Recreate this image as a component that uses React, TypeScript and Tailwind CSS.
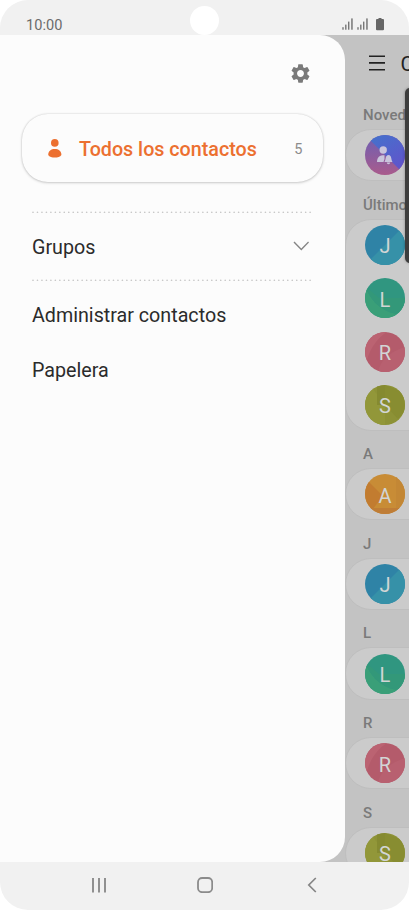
import type { ReactNode } from "react";
import { MdSettings } from "react-icons/md";

type AvatarKind = "J" | "L" | "R" | "S" | "A";

const avatarArt: Record<AvatarKind, ReactNode> = {
  J: (
    <>
      <rect width="40" height="40" fill="#2f83a6" />
      <path d="M40 0L6 34L6 40H40Z" fill="#3691a8" />
    </>
  ),
  L: (
    <>
      <rect width="40" height="40" fill="#309680" />
      <path d="M28 20H40V40H28Z" fill="#359d7b" />
      <path d="M0 8C5 21 14 32 31 36L28 40H0Z" fill="#3a9f78" />
      <path d="M0 8C5 21 14 32 31 36L40 30V20H14Z" fill="#339879" />
    </>
  ),
  R: (
    <>
      <rect width="40" height="40" fill="#b45b6b" />
      <path d="M0 0H22C14 5 6 14 2 28L0 26Z" fill="#bb6372" />
      <path d="M13 40C15 29 24 20 40 15V40Z" fill="#b86070" />
    </>
  ),
  S: (
    <>
      <rect width="40" height="40" fill="#8d9236" />
      <path d="M8 4L20 20V40H0V12Z" fill="#929739" />
      <path d="M20 0V20L33 34L40 26V8Z" fill="#888d31" />
      <path d="M12 0H20V20H12Z" fill="#858a30" />
    </>
  ),
  A: (
    <>
      <rect width="40" height="40" fill="#c88c36" />
      <path d="M0 4L18 22L4 40H0Z" fill="#c27c30" />
      <path d="M31 0H40V40H31Z" fill="#c38735" />
      <path d="M6 34H40V40H6Z" fill="#bf7d36" />
    </>
  ),
};

const groups: { label: string; items: AvatarKind[] }[] = [
  { label: "Últimos", items: ["J", "L", "R", "S"] },
  { label: "A", items: ["A"] },
  { label: "J", items: ["J"] },
  { label: "L", items: ["L"] },
  { label: "R", items: ["R"] },
  { label: "S", items: ["S"] },
];

function Avatar({ kind }: { kind: AvatarKind }) {
  return (
    <div className="grid size-10 shrink-0 place-items-center overflow-hidden rounded-full">
      <svg viewBox="0 0 40 40" className="col-start-1 row-start-1 size-10">
        {avatarArt[kind]}
      </svg>
      <span className="z-10 col-start-1 row-start-1 pt-[3px] text-[20px] leading-none text-[#d2d5d5]">
        {kind}
      </span>
    </div>
  );
}

function NewsAvatar() {
  return (
    <svg viewBox="0 0 40 40" className="size-10 shrink-0 rounded-full">
      <defs>
        <linearGradient id="warm" x1="0" y1="0" x2="0" y2="1">
          <stop offset="0.1" stopColor="#725fb0" />
          <stop offset="1" stopColor="#a95b8c" />
        </linearGradient>
        <linearGradient id="cool" x1="0" y1="0" x2="0.7" y2="1">
          <stop offset="0" stopColor="#4175cc" />
          <stop offset="1" stopColor="#6253cb" />
        </linearGradient>
      </defs>
      <rect width="40" height="40" fill="url(#warm)" />
      <path d="M0 0H40V40L6 6Z" fill="url(#cool)" />
      <g fill="#c9c5dc">
        <circle cx="18.2" cy="15" r="3.7" />
        <path d="M12 27C12 22 14.5 20.2 19.5 20.2V24L18.5 27Z" />
        <path d="M19.4 27C21 25.5 20 20 23.5 20S26 25.5 27.6 27Z" />
        <path d="M21.8 27.6H25.2A1.7 1.7 0 0 1 21.8 27.6Z" />
      </g>
    </svg>
  );
}

function SectionLabel({ children }: { children: ReactNode }) {
  return (
    <h2 className="flex h-[37.4px] shrink-0 items-end pb-[5px] pl-[18px] text-[15px] leading-[18px] font-medium whitespace-nowrap text-[#7a7a7a]">
      {children}
    </h2>
  );
}

function ContactCard({ children }: { children: ReactNode }) {
  return (
    <div className="flex w-[200px] shrink-0 flex-col gap-[13.3px] rounded-[26px] border border-[#bebebe] bg-[#cbcbcb] pt-[5.2px] pb-[5px] pl-[19px]">
      {children}
    </div>
  );
}

function Divider() {
  return (
    <svg viewBox="0 0 281 2" className="h-[2px] w-[281px]">
      <path
        d="M1 1.4H280.5"
        stroke="#c8c8c8"
        strokeWidth="1.6"
        strokeLinecap="round"
        strokeDasharray="0 4.47"
      />
    </svg>
  );
}

function Signal() {
  return (
    <svg viewBox="0 0 12 12" className="h-3 w-3" fill="#777">
      <rect x="0.3" y="9.2" width="1.4" height="2.5" />
      <rect x="3.1" y="6.6" width="1.4" height="5.1" />
      <rect x="6" y="3.6" width="1.4" height="8.1" />
      <rect x="9.2" y="0.4" width="1.5" height="11.3" />
    </svg>
  );
}

function StatusBar() {
  return (
    <header className="relative flex h-[35.4px] shrink-0 justify-between pr-[25px] pl-[26px]">
      <span className="pt-[16px] text-[14.6px] leading-[18px] text-[#6b6b6b]">10:00</span>
      <div className="absolute top-[6px] left-[190px] size-[28.5px] rounded-full bg-white" />
      <div className="flex gap-[3px] pt-[18px]">
        <Signal />
        <Signal />
        <svg viewBox="0 0 8 13" className="ml-[4px] h-[13px] w-2" fill="#666">
          <path d="M2.5 0H5.5V1H7A1 1 0 0 1 8 2V11.3A1 1 0 0 1 7 12.3H1A1 1 0 0 1 0 11.3V2A1 1 0 0 1 1 1H2.5Z" />
        </svg>
      </div>
    </header>
  );
}

function Drawer() {
  return (
    <aside className="flex w-[345px] shrink-0 flex-col rounded-r-[25px] bg-[#fcfcfc] text-[19.7px] leading-6 text-[#2b2b2b]">
      <div className="flex justify-end pt-[26.2px] pr-[32.6px]">
        <MdSettings className="size-[23px] text-[#7a7a7a]" />
      </div>

      <div className="mt-[29.3px] ml-[22px] flex h-[68px] w-[301px] items-center rounded-[26px] pr-[20.5px] pl-[26px] shadow-[0_0_2px_rgba(0,0,0,0.18),0_1px_3px_rgba(0,0,0,0.16)]">
        <svg viewBox="0 0 14 20" className="h-5 w-3.5" fill="#ec7030">
          <circle cx="6.8" cy="4.9" r="3.8" />
          <path d="M0.2 17C0.2 12.8 3.2 11 6.8 11S13.4 12.8 13.4 17C12.2 18.8 9.6 19.6 6.8 19.6S1.4 18.8 0.2 17Z" />
        </svg>
        <span className="ml-[17px] pt-[3.5px] text-[19.7px] font-medium text-[#ec7030]">
          Todos los contactos
        </span>
        <span className="ml-auto pt-[3.5px] text-[14.5px] text-[#8c8c8c]">5</span>
      </div>

      <nav className="flex flex-col pt-[29px] pl-8">
        <Divider />
        <div className="flex h-[66px] w-[277px] items-center justify-between">
          <span className="pt-[4px]">Grupos</span>
          <svg viewBox="0 0 16 10" className="h-[10px] w-4" fill="none" stroke="#858585" strokeWidth="1.4">
            <path d="M1 1L8.3 8.5L15.6 1" />
          </svg>
        </div>
        <Divider />
        <span className="pt-[22.9px]">Administrar contactos</span>
        <span className="pt-[31px]">Papelera</span>
      </nav>
    </aside>
  );
}

export default function App() {
  return (
    <div className="h-[910px] w-[409px] bg-white font-[Roboto,sans-serif]">
      <div className="flex h-full flex-col overflow-hidden rounded-[28px] bg-[#f1f1f1]">
        <StatusBar />

        <main className="relative flex h-[826.8px] shrink-0 overflow-hidden bg-[#c3c3c3]">
          <Drawer />
          <section className="flex min-w-0 flex-1 flex-col overflow-hidden">
            <div className="flex h-[56.4px] shrink-0 items-center gap-[15.5px] pl-6">
              <svg viewBox="0 0 16 16" className="mb-[2px] h-4 w-4 shrink-0" stroke="#222" strokeWidth="1.6">
                <path d="M0 1.3H16M0 7.9H16M0 14.7H16" />
              </svg>
              <h1 className="pt-px text-[20.5px] leading-6 text-[#222]">Contactos</h1>
            </div>

            <SectionLabel>Novedades</SectionLabel>
            <ContactCard>
              <NewsAvatar />
            </ContactCard>

            {groups.map((group) => (
              <div key={group.label} className="flex shrink-0 flex-col">
                <SectionLabel>{group.label}</SectionLabel>
                <ContactCard>
                  {group.items.map((kind) => (
                    <Avatar key={kind} kind={kind} />
                  ))}
                </ContactCard>
              </div>
            ))}
          </section>

          {/* popup peeking in from the right edge */}
          <div className="absolute top-[53px] left-[405px] h-[175px] w-5 rounded-[5px] bg-[#3d3d3d] shadow-[0_0_3px_rgba(0,0,0,0.35)]" />
        </main>

        <footer className="flex h-[46px] shrink-0 items-center pl-[92px]">
          <svg viewBox="0 0 14 16" className="h-4 w-3.5" stroke="#8b8b8b" strokeWidth="1.9">
            <path d="M1 1V15.5M7 1V15.5M13 1V15.5" />
          </svg>
          <svg viewBox="0 0 16 16" className="ml-[91px] size-4" fill="none" stroke="#8b8b8b" strokeWidth="1.8">
            <rect x="1" y="1" width="14.2" height="14.2" rx="4.2" />
          </svg>
          <svg viewBox="0 0 10 16" className="ml-[94px] h-4 w-2.5" fill="none" stroke="#858585" strokeWidth="1.7">
            <path d="M8.8 1L1.8 8L8.8 15" />
          </svg>
        </footer>
      </div>
    </div>
  );
}
